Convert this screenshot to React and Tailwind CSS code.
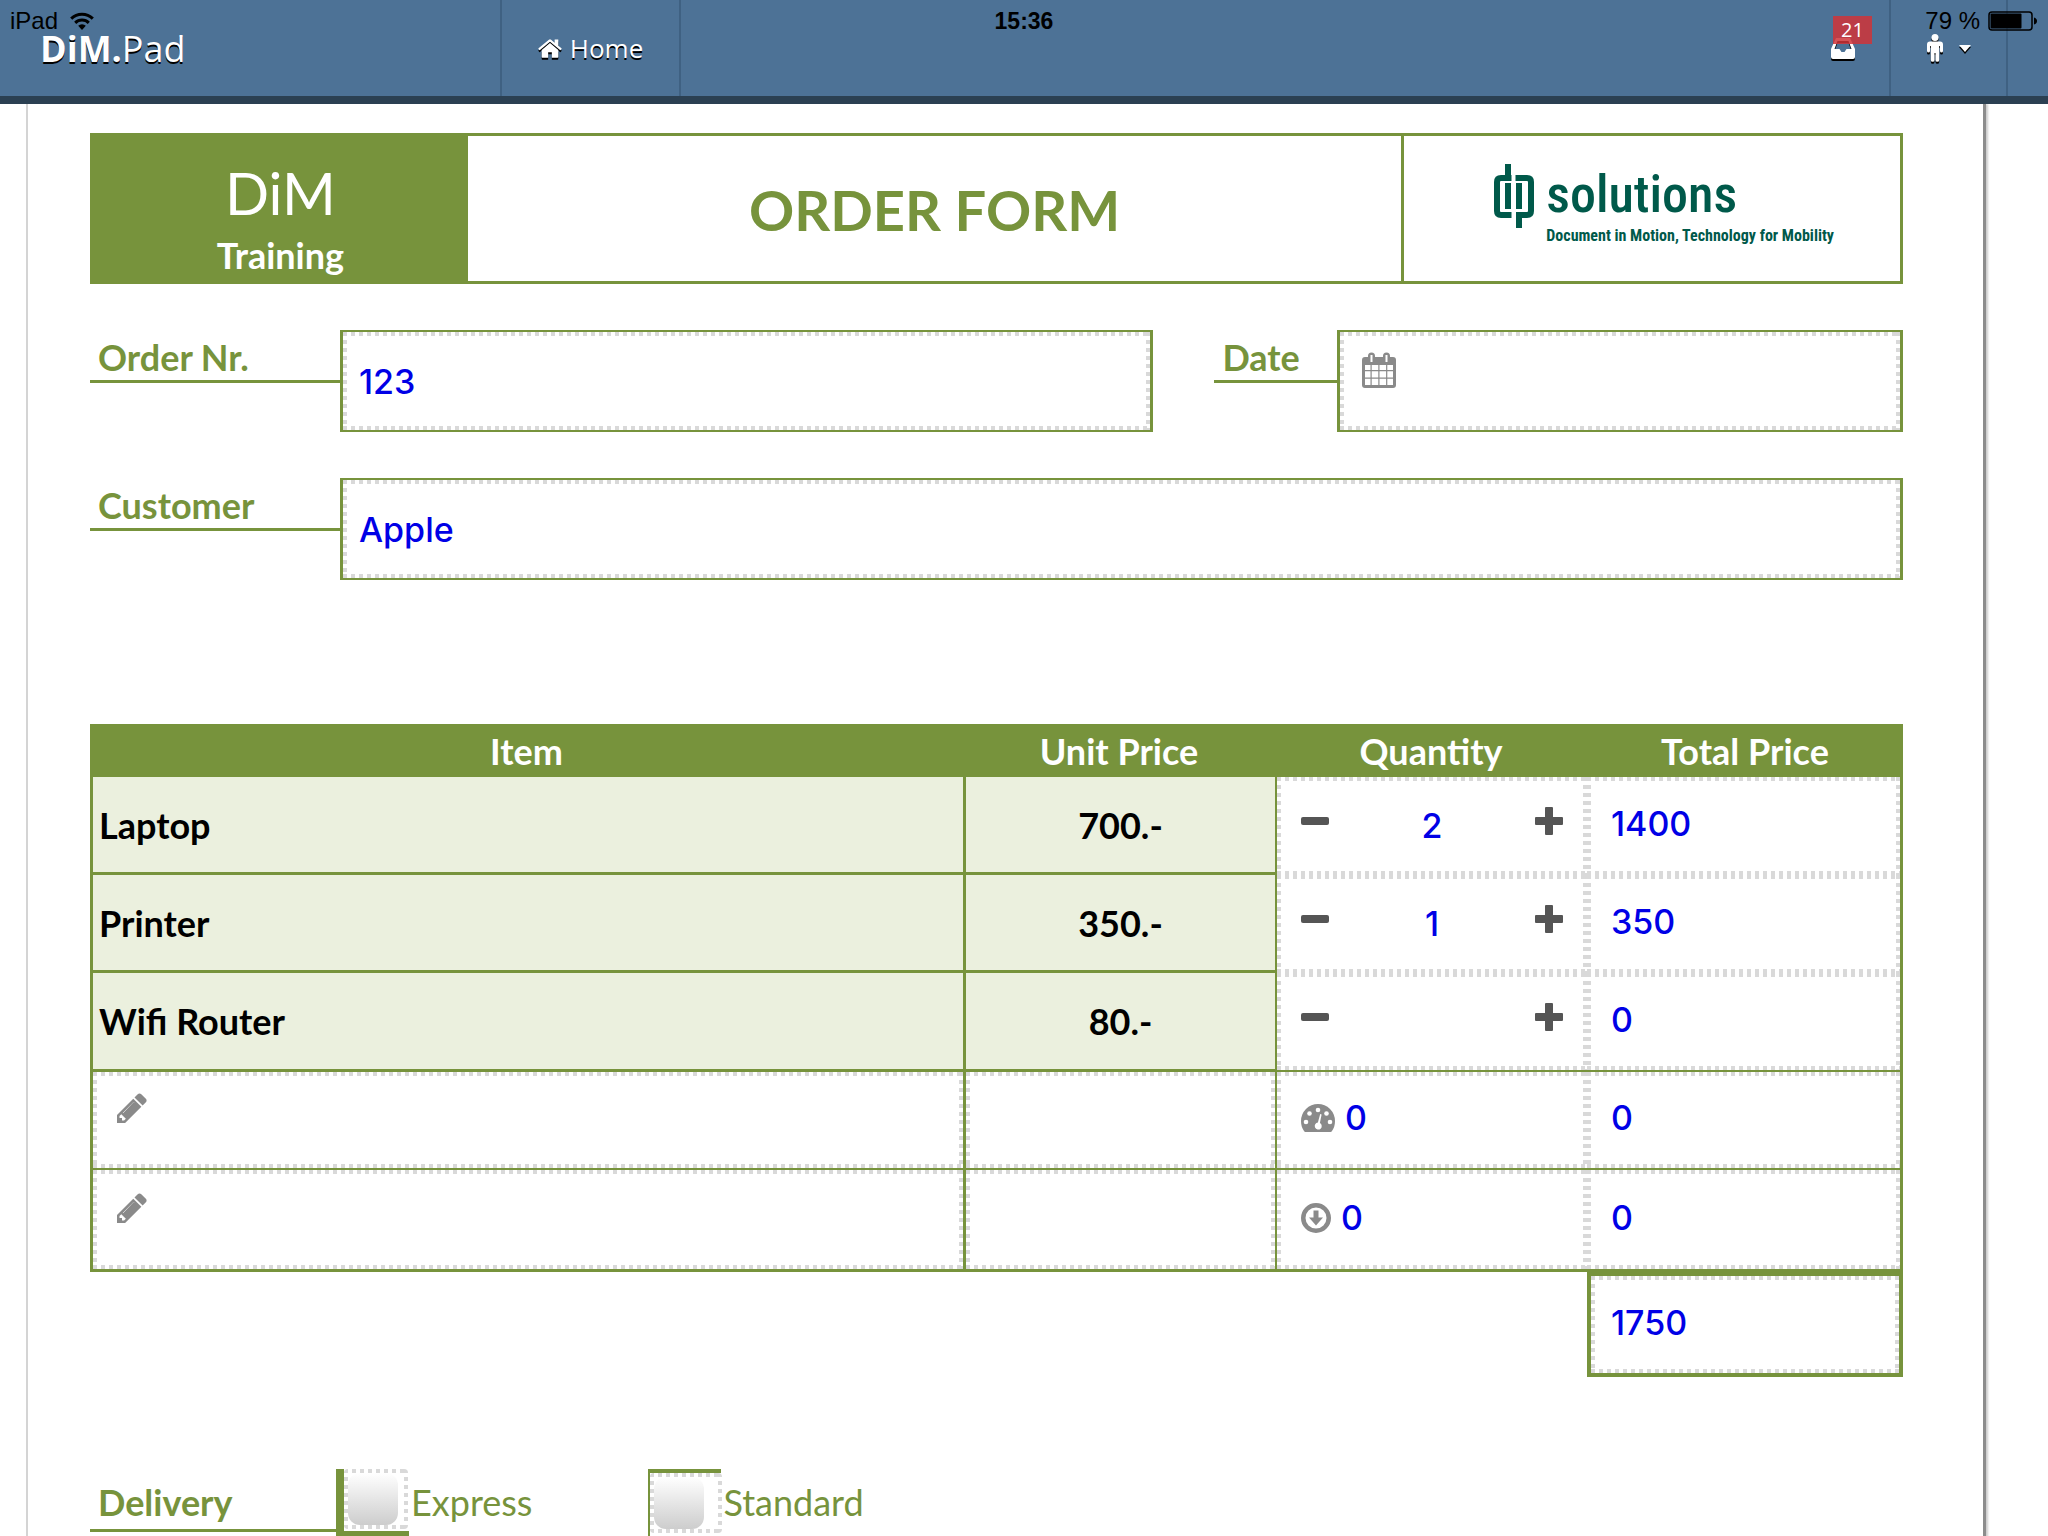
const INK = 'font-[Inter,sans-serif] text-[34px] leading-[48px] font-medium text-[#0000e6]'
const DOTS =
  'bg-no-repeat [background-image:repeating-linear-gradient(90deg,#d9d9d9_0_4px,transparent_4px_8px),repeating-linear-gradient(90deg,#d9d9d9_0_4px,transparent_4px_8px),repeating-linear-gradient(180deg,#d9d9d9_0_4px,transparent_4px_8px),repeating-linear-gradient(180deg,#d9d9d9_0_4px,transparent_4px_8px)] [background-size:100%_4px,100%_4px,4px_100%,4px_100%] [background-position:top,bottom,left,right]'

const items = [
  { name: 'Laptop', price: '700.-', qty: '2', total: '1400' },
  { name: 'Printer', price: '350.-', qty: '1', total: '350' },
  { name: 'Wifi Router', price: '80.-', qty: '', total: '0' },
]

const HomeIcon = ({ className }) => (
  <svg className={className} viewBox="64 160 1664 1408" fill="currentColor" aria-hidden="true">
    <path d="M1472 992v480q0 26-19 45t-45 19h-384v-384h-256v384h-384q-26 0-45-19t-19-45v-480q0-1 .5-3t.5-3l575-474 575 474q1 2 1 6zm223-69l-62 74q-8 9-21 11h-3q-13 0-21-7l-692-577-692 577q-12 8-24 7-13-2-21-11l-62-74q-8-10-7-23.5t11-21.5l719-599q32-26 76-26t76 26l244 204v-195q0-14 9-23t23-9h192q14 0 23 9t9 23v408l219 182q10 8 11 21.5t-7 23.5z" />
  </svg>
)

const PencilIcon = ({ className }) => (
  <svg className={className} viewBox="128 128 1536 1536" fill="currentColor" aria-hidden="true">
    <path d="M491 1536l91-91-235-235-91 91v107h128v128h107zm523-928q0-22-22-22-10 0-17 7l-542 542q-7 7-7 17 0 22 22 22 10 0 17-7l542-542q7-7 7-17zm-54-192l416 416-832 832h-416v-416zm683 96q0 53-37 90l-166 166-416-416 166-165q36-38 90-38 53 0 91 38l235 234q37 39 37 91z" />
    <path d="M420 1190l560-600 60 60-580 580z" />
  </svg>
)

const CalendarIcon = ({ className }) => (
  <svg className={className} viewBox="0 0 34 36" fill="currentColor" aria-hidden="true">
    <path
      fillRule="evenodd"
      d="M3 5h3V4a3.500 3.500 0 0 1 7 0v1h8V4a3.500 3.500 0 0 1 7 0v1h3a3 3 0 0 1 3 3v25a3 3 0 0 1-3 3H3a3 3 0 0 1-3-3V8a3 3 0 0 1 3-3zM8.500 3v7h2V3zM23.500 3v7h2V3zM3 13v5h5.500v-5zM9.700 13v5h6.600v-5zM17.500 13v5h6.600v-5zM25.300 13v5h5.700v-5zM3 19.200v6.300h5.500v-6.300zM9.700 19.200v6.300h6.600v-6.300zM17.500 19.200v6.300h6.600v-6.300zM25.300 19.200v6.300h5.700v-6.300zM3 26.800v6.200h5.500v-6.200zM9.700 26.800v6.200h6.600v-6.200zM17.500 26.800v6.200h6.600v-6.200zM25.300 26.800v6.200h5.700v-6.200z"
    />
  </svg>
)

const GaugeIcon = ({ className }) => (
  <svg className={className} viewBox="0 0 34 28" fill="currentColor" aria-hidden="true">
    <path d="M17 0a17 17 0 0 1 17 17c0 4-1 7-3 10q-.5 1-1.500 1h-25q-1 0-1.500-1C1 24 0 21 0 17A17 17 0 0 1 17 0z" />
    <g fill="#fff">
      <circle cx="5" cy="18" r="2.300" />
      <circle cx="8.500" cy="9.500" r="2.300" />
      <circle cx="17" cy="6" r="2.300" />
      <circle cx="25.500" cy="9.500" r="2.300" />
      <circle cx="29" cy="18" r="2.300" />
      <path d="M19.200 10l1.400.4-1.700 8.600a3.500 3.500 0 1 1-2-.4z" />
    </g>
  </svg>
)

const ArrowDownIcon = ({ className }) => (
  <svg className={className} viewBox="0 0 30 30" fill="currentColor" aria-hidden="true">
    <path fillRule="evenodd" d="M15 0a15 15 0 1 1 0 30 15 15 0 0 1 0-30zM15 4.500a10.500 10.500 0 1 0 0 21 10.500 10.500 0 0 0 0-21z" />
    <path d="M12.500 7.500h5v7h4.500L15 22.500l-7-8h4.500z" />
  </svg>
)

const WifiIcon = ({ className }) => (
  <svg className={className} viewBox="0 0 24 18" fill="none" stroke="currentColor" strokeWidth="3" aria-hidden="true">
    <path d="M1.200 6.700a15.500 15.500 0 0 1 21.600 0M5.200 10.900a9.700 9.700 0 0 1 13.600 0" />
    <path d="M8.200 13.800a5.500 5.500 0 0 1 7.600 0L12 18z" fill="currentColor" stroke="none" />
  </svg>
)

const InboxIcon = ({ className }) => (
  <svg className={className} viewBox="0 0 24 21" fill="currentColor" aria-hidden="true">
    <path fillRule="evenodd" d="M5 0h14l5 11v8a2 2 0 0 1-2 2H2a2 2 0 0 1-2-2v-8zM6.500 3L3.500 11h5l2 3h3l2-3h5l-3-8z" />
  </svg>
)

const PersonIcon = ({ className }) => (
  <svg className={className} viewBox="0 0 16 28" fill="currentColor" aria-hidden="true">
    <circle cx="8" cy="3.500" r="3.500" />
    <path d="M3 7.500h10a3 3 0 0 1 3 3V17a1.500 1.500 0 0 1-3 0v-5h-.8v14a1.800 1.800 0 0 1-3.700 0v-7h-1v7a1.800 1.800 0 0 1-3.700 0V12H3v5a1.500 1.500 0 0 1-3 0v-6.500a3 3 0 0 1 3-3z" />
  </svg>
)

const BatteryIcon = ({ className }) => (
  <svg className={className} viewBox="0 0 50 20" aria-hidden="true">
    <rect x="1" y="1" width="43" height="18" rx="3" fill="none" stroke="#000" strokeWidth="1.500" />
    <rect x="2.500" y="2.500" width="31" height="15" rx="1" />
    <path d="M46 6.500q3 1 3 3.500t-3 3.500z" />
  </svg>
)

const LogoMark = ({ className }) => (
  <svg className={className} viewBox="0 0 40 64" fill="none" stroke="currentColor" strokeWidth="6" aria-hidden="true">
    <path d="M14 0v14M17.500 14H7q-4 0-4 4v29q0 4 4 4h10.500" />
    <path d="M14 19v26M25 19v26" />
    <path d="M21.500 14H33q4 0 4 4v29q0 4-4 4h-8v13" />
  </svg>
)

function TopBar() {
  return (
    <header className="relative h-[104px] border-b-8 border-[#2b4052] bg-[#4d7296] font-['Open_Sans',sans-serif]">
      <div className="absolute inset-x-0 top-0 grid h-[42px] grid-cols-3 items-center px-2.5 font-['Liberation_Sans',sans-serif] text-[24px] text-black">
        <span className="flex items-center gap-3">
          iPad <WifiIcon className="w-6" />
        </span>
        <span className="text-center text-[23px] font-bold">15:36</span>
        <span className="flex items-center justify-end gap-2">
          79 % <BatteryIcon className="w-[50px]" />
        </span>
      </div>
      <div className="flex h-full text-white [text-shadow:0_2px_0_#000]">
        <div className="w-[502px] border-r-2 border-[#3f6182] pl-10 pt-6 text-[36px] leading-[50px]">
          <b>DiM.</b>Pad
        </div>
        <a href="#home" className="flex w-[179px] items-center justify-center gap-2 border-r-2 border-[#3f6182] text-[26px]">
          <HomeIcon className="w-6 drop-shadow-[0_2px_0_#000]" />
          Home
        </a>
        <button aria-label="Inbox" className="relative ml-auto w-[86px]">
          <InboxIcon className="ml-7 w-6 drop-shadow-[0_2px_0_#000]" />
          <span className="absolute left-[30px] top-4 bg-[#d03438]/85 px-2 text-[20px] leading-7 [text-shadow:none]">21</span>
        </button>
        <button aria-label="Account" className="flex w-[119px] items-center gap-4 border-x-2 border-[#3f6182] pl-9">
          <PersonIcon className="w-4 drop-shadow-[0_2px_0_#000]" />
          <svg className="w-3 drop-shadow-[0_2px_0_#000]" viewBox="0 0 12 7" fill="currentColor" aria-hidden="true">
            <path d="M0 0h12L6 7z" />
          </svg>
        </button>
        <div className="w-10" />
      </div>
    </header>
  )
}

function Field({ id, label, value, icon }) {
  return (
    <>
      <label htmlFor={id} className="mb-[49px] border-b-[3px] border-[#77933c] pl-2 pt-1 text-[36px] font-bold leading-[46px]">
        {label}
      </label>
      <div className="relative h-[102px] border-x-[3px] border-y-2 border-[#77933c]">
        {icon}
        <input id={id} defaultValue={value} className={`h-full w-full px-4 outline-none ${INK} ${DOTS}`} />
      </div>
    </>
  )
}

function Check({ id, label, boxClass, padClass }) {
  return (
    <div className="flex">
      <div className={`h-[70px] w-[73px] border-[#77933c] ${boxClass}`}>
        <div className={`h-[60px] rounded p-1 ${padClass} ${DOTS} bg-white`}>
          <input id={id} type="checkbox" className="h-[52px] w-[50px] appearance-none rounded-xl bg-linear-to-b from-white to-[#cdcdcd]" />
        </div>
      </div>
      <label htmlFor={id} className="pl-0.5 pt-2.5 text-[36px] leading-[46px]">
        {label}
      </label>
    </div>
  )
}

function OrderTable() {
  const th = 'h-[53px] p-0 font-bold'
  const name = 'border-b-[3px] border-l-[3px] border-[#77933c] bg-[#ebf0de] p-0'
  return (
    <table className="mt-36 w-full table-fixed border-separate border-spacing-0 text-[36px] leading-10">
      <colgroup>
        <col />
        <col className="w-[312px]" />
        <col className="w-[312px]" />
        <col className="w-[316px]" />
      </colgroup>
      <thead className="bg-[#77933c] text-white">
        <tr>
          <th className={th}>Item</th>
          <th className={th}>Unit Price</th>
          <th className={th}>Quantity</th>
          <th className={th}>Total Price</th>
        </tr>
      </thead>
      <tbody>
        {items.map((item, i) => (
          <tr key={item.name} className={`font-bold text-black ${i === 2 ? 'h-[99px]' : 'h-[98px]'}`}>
            <td className={`${name} pl-1.5`}>{item.name}</td>
            <td className={`${name} text-center`}>{item.price}</td>
            <td className={`border-l-2 border-[#77933c] p-0 ${i === 2 ? 'border-b-2' : ''} ${DOTS}`}>
              <div className="flex items-center justify-between px-6 text-[#555]">
                <button aria-label={`Less ${item.name}`} className="mb-2.5 flex h-7 w-7 items-center">
                  <span className="h-2 w-7 rounded-xs bg-current" />
                </button>
                <input aria-label={`${item.name} quantity`} defaultValue={item.qty} className={`w-24 text-center outline-none ${INK}`} />
                <button aria-label={`More ${item.name}`} className="mb-2.5">
                  <svg className="w-7" viewBox="0 0 28 28" fill="currentColor" aria-hidden="true">
                    <path d="M10 1q0-1 1-1h6q1 0 1 1v9h9q1 0 1 1v6q0 1-1 1h-9v9q0 1-1 1h-6q-1 0-1-1v-9H1q-1 0-1-1v-6q0-1 1-1h9z" />
                  </svg>
                </button>
              </div>
            </td>
            <td className={`border-r-[3px] border-[#77933c] p-0 ${i === 2 ? 'border-b-2' : ''} ${DOTS}`}>
              <output className={`block pb-1 pl-6 ${INK}`}>{item.total}</output>
            </td>
          </tr>
        ))}
        {[GaugeIcon, ArrowDownIcon].map((Icon, i) => {
          const cell = i === 0 ? 'h-[98px] border-b-2 border-[#77933c] p-0' : 'h-[102px] border-b-[3px] border-[#77933c] p-0'
          return (
            <tr key={i}>
              <td className={`${cell} border-l-[3px] ${DOTS}`}>
                <div className="flex items-center gap-2 pb-6 pl-6 text-[#8a8a8a]">
                  <PencilIcon className="w-[30px]" />
                  <input aria-label="Item" className={`flex-1 outline-none ${INK}`} />
                </div>
              </td>
              <td className={`${cell} border-l-[3px] ${DOTS}`}>
                <input aria-label="Unit price" className={`w-full px-4 outline-none ${INK}`} />
              </td>
              <td className={`${cell} border-l-2 ${DOTS}`}>
                <div className="flex items-center gap-2.5 pb-1 pl-6 text-[#8a8a8a]">
                  <Icon className={i === 0 ? 'w-[34px]' : 'w-[30px]'} />
                  <input aria-label="Quantity" defaultValue="0" className={`w-32 outline-none ${INK}`} />
                </div>
              </td>
              <td className={`${cell} border-r-[3px] ${DOTS}`}>
                <output className={`block pb-1 pl-6 ${INK}`}>0</output>
              </td>
            </tr>
          )
        })}
      </tbody>
      <tfoot>
        <tr>
          <td colSpan={3} />
          <td className={`h-[105px] border-4 border-[#77933c] p-0 ${DOTS}`}>
            <output className={`block pb-1 pl-5 ${INK}`}>1750</output>
          </td>
        </tr>
      </tfoot>
    </table>
  )
}

export default function App() {
  return (
    <div className="h-screen overflow-hidden bg-white font-[Lato,sans-serif] text-[#77933c]">
      <TopBar />
      <main className="ml-[26px] mr-[62px] border-l-2 border-r-[3px] border-l-[#d4d4d4] border-r-[#8c8c8c] pb-20 pl-[62px] pr-20 pt-[29px] shadow-[2px_0_2px_#ccc]">
        <div className="grid h-[151px] grid-cols-[375fr_934fr_499fr] border-[3px] border-[#77933c]">
          <div className="bg-[#77933c] text-center text-white">
            <div className="pt-5 text-[58px] leading-[74px]">DiM</div>
            <div className="text-[36px] font-bold leading-[50px]">Training</div>
          </div>
          <h1 className="flex items-center justify-center pt-0.5 text-[56px] font-bold leading-[70px]">ORDER FORM</h1>
          <div className="flex justify-center gap-3 border-l-[3px] border-[#77933c] pl-6 pt-7 font-['Roboto_Condensed','DejaVu_Sans_Condensed',sans-serif] text-[#00594a]">
            <LogoMark className="h-16 w-10" />
            <div>
              <div className="text-[52px] font-medium leading-[62px]">solutions</div>
              <div className="text-[16px] font-bold leading-5">Document in Motion, Technology for Mobility</div>
            </div>
          </div>
        </div>

        <div className="mt-[46px] grid grid-cols-[250px_814fr_61px_123px_566fr]">
          <Field id="order" label="Order Nr." value="123" />
          <span />
          <Field
            id="date"
            label="Date"
            value=""
            icon={<CalendarIcon className="absolute left-[22px] top-5 w-[34px] text-[#8a8a8a]" />}
          />
        </div>
        <div className="mt-[46px] grid grid-cols-[250px_1fr]">
          <Field id="customer" label="Customer" value="Apple" />
        </div>

        <OrderTable />

        <div role="group" aria-labelledby="delivery" className="mt-[92px] flex">
          <div id="delivery" className="h-[63px] w-[246px] border-b-[3px] border-[#77933c] pl-2 pt-2.5 text-[36px] font-bold leading-[46px]">
            Delivery
          </div>
          <Check id="express" label="Express" boxClass="border-b-8 border-l-8" padClass="w-16" />
          <div className="w-[116px]" />
          <Check id="standard" label="Standard" boxClass="border-l-2 border-t-4" padClass="w-[72px]" />
        </div>
      </main>
    </div>
  )
}
